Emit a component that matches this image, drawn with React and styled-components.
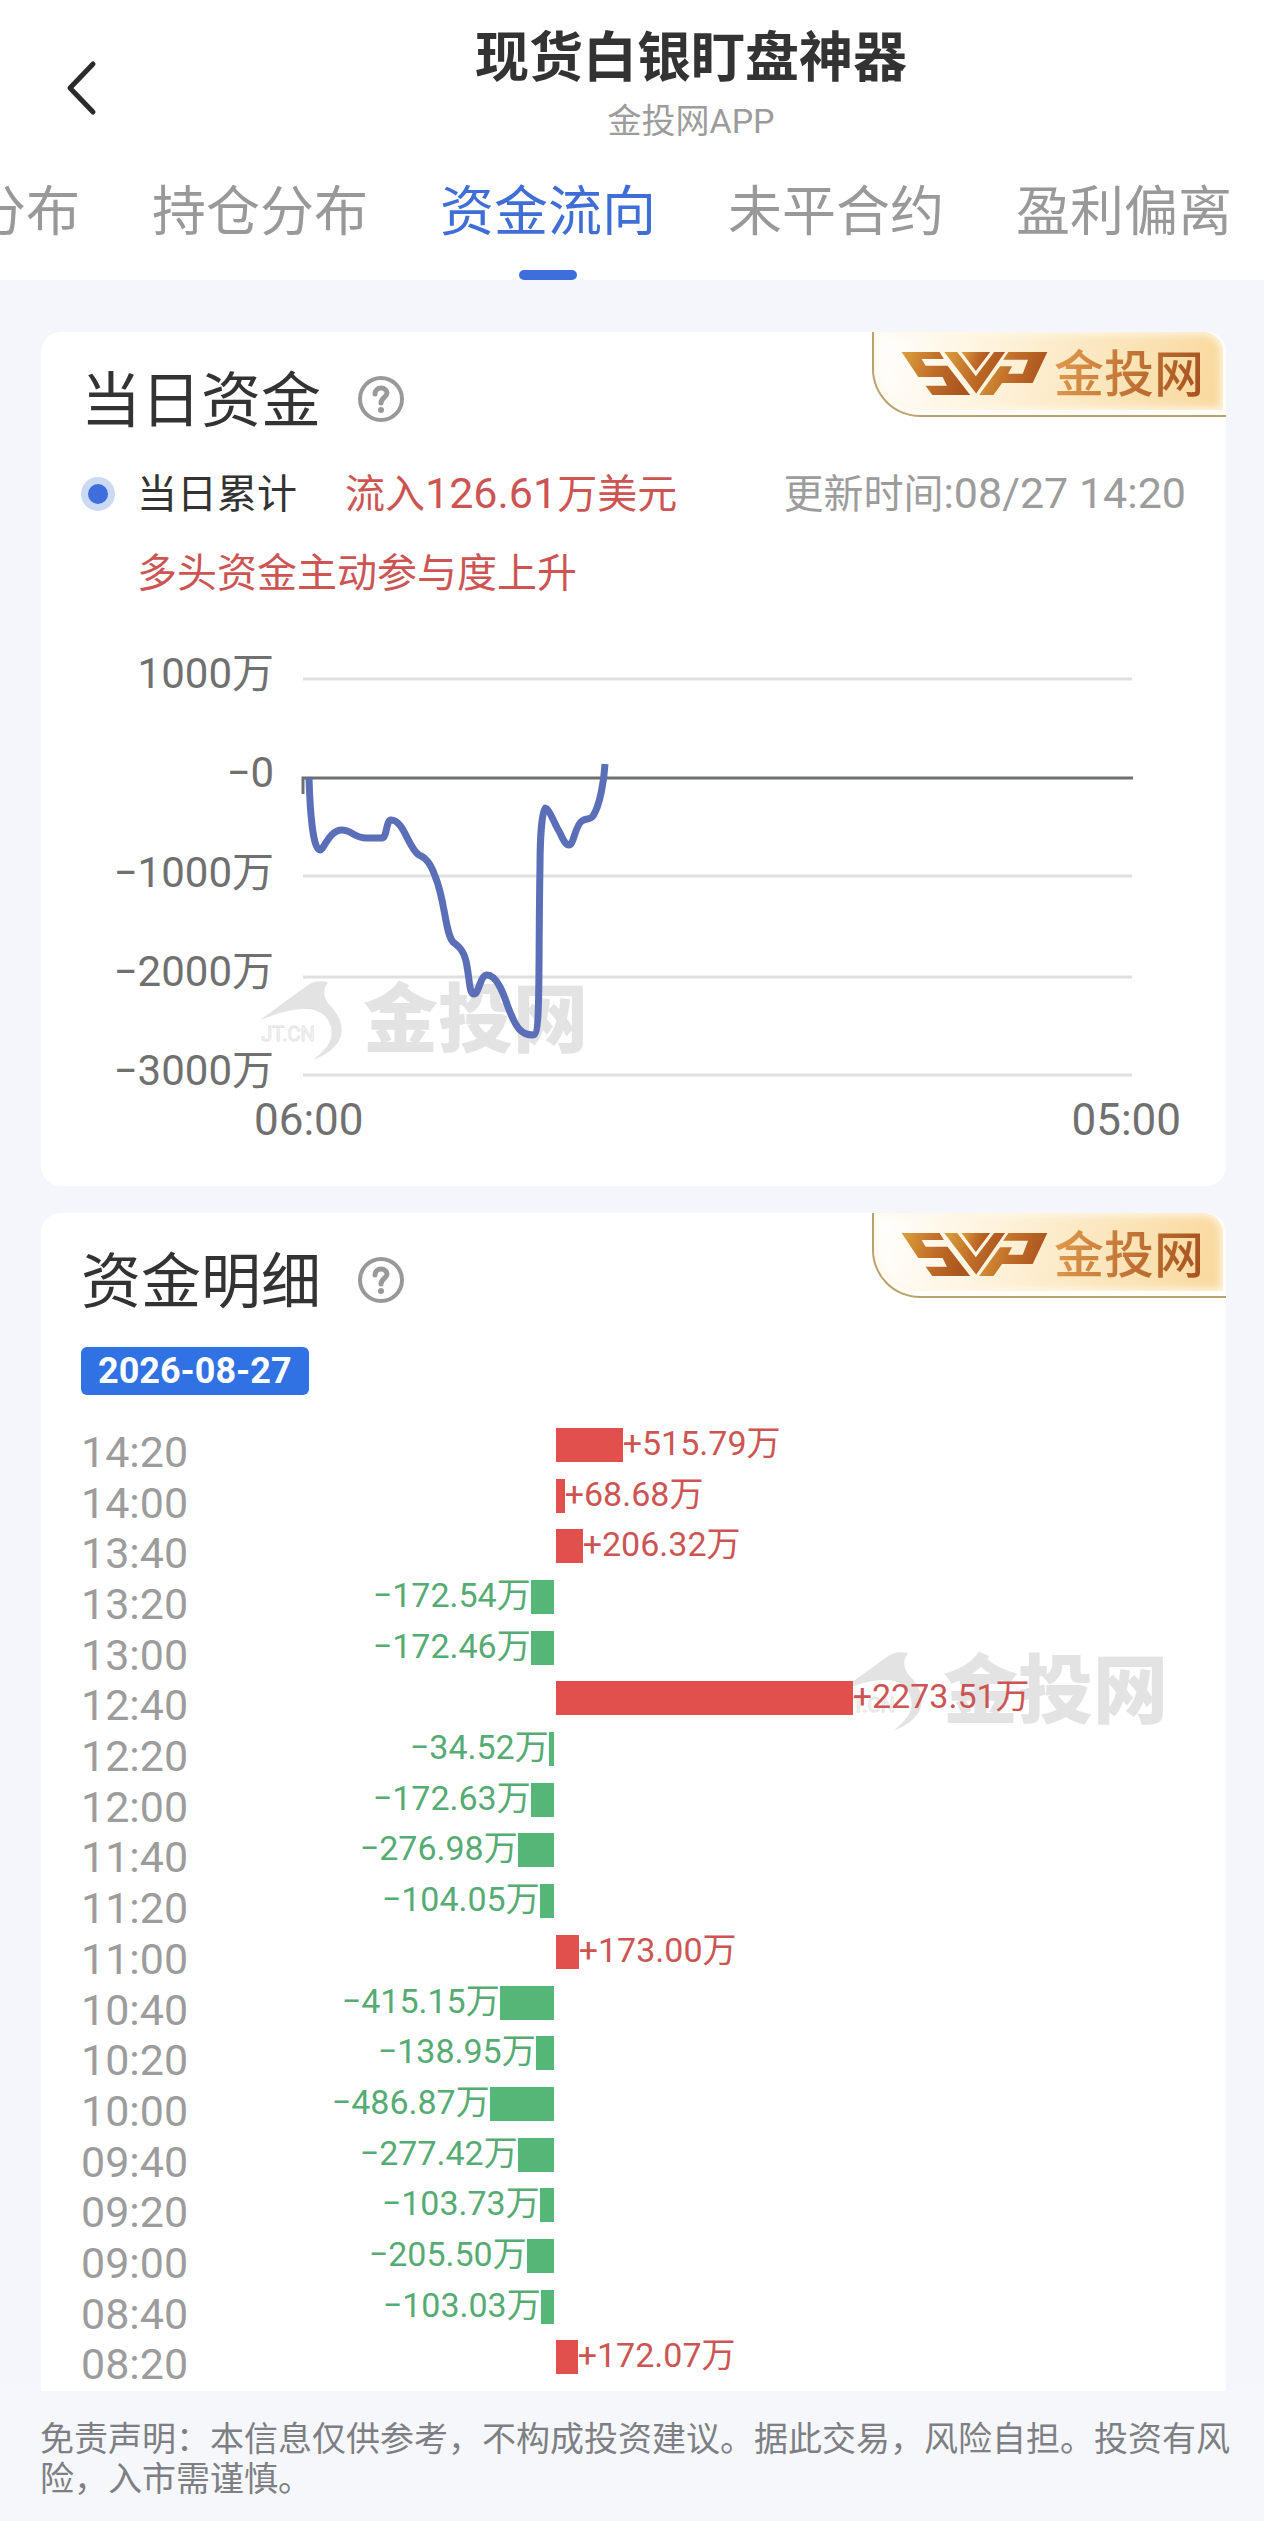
import React, { useState } from "react";
import styled, { createGlobalStyle } from "styled-components";

const GlobalStyle = createGlobalStyle`
    * {
        box-sizing: border-box;
    }

    body {
        margin: 0;
        background-color: #f5f6fb;
        font-family: Roboto, 'Noto Sans CJK SC', sans-serif;
        color: #333333;
    }

    button {
        border: none;
        background: none;
        padding: 0;
        font: inherit;
        color: inherit;
        cursor: pointer;
    }
`;

const Page = styled.div`
    overflow: hidden;
`;

const Header = styled.header`
    background-color: #ffffff;
`;

const TitleBar = styled.div`
    display: grid;
    grid-template-columns: 118px 1fr;
    padding-top: 20px;
`;

const BackButton = styled.button`
    display: flex;
    align-items: center;
    height: 136px;
    padding-left: 66px;
`;

const TitleBox = styled.div`
    text-align: center;
`;

const Title = styled.h1`
    margin: 0;
    font-size: 54px;
    font-weight: 700;
    line-height: 78px;
`;

const SubTitle = styled.div`
    color: #9c9c9c;
    font-size: 34px;
    line-height: 46px;
`;

const Tabs = styled.nav`
    display: flex;
    justify-content: flex-end;
    gap: 72px;
    padding: 17px 32px 0px 0px;
    overflow: hidden;
`;

const Tab = styled.button`
    display: flex;
    flex-direction: column;
    align-items: center;
    gap: 17px;
    flex-shrink: 0;

    color: ${props => (props.$active ? '#3f6fd6' : '#999999')};
    font-size: 54px;
    line-height: 80px;
    white-space: nowrap;
`;

const TabLine = styled.span`
    width: 58px;
    height: 10px;
    border-radius: 5px;
    background-color: ${props => (props.$active ? '#3d6edb' : 'transparent')};
`;

const Main = styled.main`
    display: flex;
    flex-direction: column;
    gap: 27px;
    padding: 52px 38px 0px 41px;
`;

const Card = styled.section`
    position: relative;
    padding: ${props => (props.$open ? '38px 40px 0px 40px' : '38px 40px 37px 40px')};
    border-radius: ${props => (props.$open ? '20px 20px 0 0' : '20px')};
    background-color: #ffffff;
    overflow: hidden;
`;

const CardBody = styled.div`
    position: relative;
`;

const CardHead = styled.div`
    display: flex;
    align-items: center;
    gap: 36px;
    height: 60px;
`;

const CardTitle = styled.h2`
    margin: 0;
    padding-top: 4px;
    font-size: 60px;
    font-weight: 400;
    line-height: 60px;
`;

const HelpButton = styled.button`
    display: flex;
`;

const BadgeBox = styled.div`
    position: absolute;
    top: 0;
    right: 0;
    width: 354px;
    height: 85px;
    padding: 0px 3px 5px 0px;

    border-left: 2px solid #b9a26c;
    border-bottom: 2px solid #b9a26c;
    border-radius: 0 0 0 48px;
    background-color: #fffdf8;
`;

const BadgeFill = styled.div`
    display: flex;
    align-items: center;
    gap: 6px;
    height: 100%;
    padding: 5px 0px 0px 27px;

    border-radius: 0 20px 0 44px;
    background: linear-gradient(100deg, #ffffff 0%, #fef4df 30%, #fbe6bd 65%, #f9d89c 100%);
    box-shadow: inset 0 0 8px 2px #fff8e8;
`;

const BadgeText = styled.span`
    padding-top: 2px;
    font-size: 50px;
    font-weight: 500;
    line-height: 60px;
    color: transparent;
    background: linear-gradient(100deg, #e09a4c, #a4501f);
    background-clip: text;
`;

const WatermarkBox = styled.div`
    position: absolute;
    top: ${props => props.$top};
    left: ${props => props.$left};
    display: flex;
    align-items: center;
    gap: 20px;
    color: #e3e3e3;
`;

const WatermarkText = styled.span`
    font-size: 75px;
    font-weight: 900;
    line-height: 80px;
`;

const Line = styled.div`
    display: flex;
    align-items: center;
    font-size: 40px;
    line-height: 79px;
`;

const Legend = styled(Line)`
    margin-top: 24px;
`;

const Dot = styled.span`
    width: 34px;
    height: 34px;
    border: 7px solid #cbd9f5;
    border-radius: 50%;
    background-color: #3d6edb;
`;

const LegendName = styled.span`
    margin-left: 22px;
`;

const Inflow = styled.span`
    margin-left: 48px;
    color: #cc5553;
`;

const Updated = styled.time`
    margin-left: auto;
    color: #9c9c9c;
`;

const Num = styled.span`
    font-size: 43px;
`;

const Hint = styled(Line)`
    padding-left: 56px;
    color: #cc5553;
`;

const Chart = styled.div`
    display: grid;
    grid-template-columns: 193px 1fr;
    gap: 29px;
    margin-top: 41px;
    padding-right: 54px;
`;

const YAxis = styled.div`
    display: flex;
    flex-direction: column;
    justify-content: space-between;
    height: 437px;

    color: #707070;
    font-size: 42px;
    line-height: 40px;
    text-align: right;
`;

const Plot = styled.svg`
    display: block;
    width: 100%;
    margin-top: 23px;
    overflow: visible;
`;

const XAxis = styled.div`
    display: flex;
    justify-content: space-between;
    padding: 0px 5px 0px 173px;

    color: #707070;
    font-size: 44px;
    line-height: 58px;
`;

const DateTag = styled.div`
    width: fit-content;
    margin-top: 36px;
    padding: 0px 17px;
    border-radius: 6px;
    background-color: #3071e3;

    color: #ffffff;
    font-size: 36px;
    font-weight: 700;
    line-height: 48px;
`;

const FlowList = styled.ul`
    display: grid;
    grid-auto-rows: 1fr;
    height: 963px;
    margin: 33px 0px 0px;
    padding: 0;
    list-style: none;
`;

const FlowRow = styled.li`
    display: grid;
    grid-template-columns: 3fr 4fr;
    gap: 2px;
    align-items: start;
`;

const FlowSide = styled.div`
    display: flex;
    justify-content: space-between;
    height: 34px;
`;

const FlowTime = styled.time`
    color: #9c9c9c;
    font-size: 43px;
    line-height: 48px;
`;

const FlowValue = styled.div`
    display: flex;
    color: ${props => (props.$up ? '#cc5553' : '#56ab73')};
    font-size: 34px;
    line-height: 30px;
    white-space: nowrap;
`;

const FlowBar = styled.span`
    height: 34px;
    background-color: ${props => (props.$up ? '#e2504d' : '#56b678')};
`;

const Disclaimer = styled.footer`
    padding: 28px 32px 30px 40px;
    background-color: #f6f7fb;

    color: #7d7f84;
    font-size: 34px;
    line-height: 40px;
`;

const tabs = ['分布', '持仓分布', '资金流向', '未平合约', '盈利偏离'];

const ticks = ['1000万', '−0', '−1000万', '−2000万', '−3000万'];

const flows = [
    ['14:20', 515.79],
    ['14:00', 68.68],
    ['13:40', 206.32],
    ['13:20', -172.54],
    ['13:00', -172.46],
    ['12:40', 2273.51],
    ['12:20', -34.52],
    ['12:00', -172.63],
    ['11:40', -276.98],
    ['11:20', -104.05],
    ['11:00', 173.00],
    ['10:40', -415.15],
    ['10:20', -138.95],
    ['10:00', -486.87],
    ['09:40', -277.42],
    ['09:20', -103.73],
    ['09:00', -205.50],
    ['08:40', -103.03],
    ['08:20', 172.07],
];

// pixels of bar per 万
const BAR_SCALE = 0.1305;

function Badge() {
    return (
        <BadgeBox>
            <BadgeFill>
                <svg width="147" height="45" viewBox="18 29 442 133" aria-hidden="true">
                    <defs>
                        <linearGradient id="svp" x1="0" y1="0" x2="1" y2="0.2">
                            <stop offset="0" stopColor="#dca03c" />
                            <stop offset="0.5" stopColor="#c2702a" />
                            <stop offset="1" stopColor="#ab551f" />
                        </linearGradient>
                    </defs>
                    <g fill="url(#svp)">
                        <path d="M20 31H134L147 52H80L92 72H158L226 160H112L92 132H156L143 106H70Z" />
                        <path d="M148 31H187L243 104L298 31H331L244 156Z" />
                        <path d="M200 31H286L243 88Z" />
                        <path d="M341 31H458L414 124H322L296 160H253L316 74H352L340 96H384L400 54H325Z" />
                    </g>
                </svg>
                <BadgeText>金投网</BadgeText>
            </BadgeFill>
        </BadgeBox>
    );
}

function Watermark({ top, left }) {
    return (
        <WatermarkBox $top={top} $left={left} aria-hidden="true">
            <svg width="84" height="80" viewBox="26 30 250 240">
                <path
                    fill="currentColor"
                    d="M28 150C80 112 120 82 165 50C185 34 208 30 232 37C212 62 222 90 237 106C264 132 276 160 272 190C268 225 230 255 188 269C224 240 245 215 243 185C240 150 220 125 180 118C130 112 80 130 28 150Z"
                />
                <text x="32" y="213" fontSize="60" fill="#ffffff" stroke="#e3e3e3" strokeWidth="3">JT.CN</text>
            </svg>
            <WatermarkText>金投网</WatermarkText>
        </WatermarkBox>
    );
}

function Help() {
    return (
        <HelpButton aria-label="说明">
            <svg width="48" height="48" viewBox="0 0 48 48" fill="none" stroke="#999999">
                <circle cx="24" cy="23" r="21" strokeWidth="4" />
                <path d="M18 18C18 14 21 12 24 12C28 12 30 15 30 17C30 21 24 22 24 27" strokeWidth="5" strokeLinecap="round" />
                <circle cx="24" cy="34" r="3" fill="#999999" stroke="none" />
            </svg>
        </HelpButton>
    );
}

function Flow({ time, value }) {
    const up = value > 0;
    const width = Math.round(Math.abs(value) * BAR_SCALE);
    const text = `${up ? '+' : '−'}${Math.abs(value).toFixed(2)}万`;

    return (
        <FlowRow>
            <FlowSide>
                <FlowTime>{time}</FlowTime>
                {!up && <FlowValue>{text}<FlowBar style={{ width }} /></FlowValue>}
            </FlowSide>
            <FlowSide>
                {up && <FlowValue $up><FlowBar $up style={{ width }} />{text}</FlowValue>}
            </FlowSide>
        </FlowRow>
    );
}

function App() {
    const [active, setActive] = useState('资金流向');

    return (
        <Page>
            <GlobalStyle />
            <Header>
                <TitleBar>
                    <BackButton aria-label="返回">
                        <svg width="32" height="56" viewBox="0 0 32 56" fill="none" stroke="#2b2b2b" strokeWidth="5" strokeLinecap="round" strokeLinejoin="round">
                            <path d="M27 4L4 28L27 52" />
                        </svg>
                    </BackButton>
                    <TitleBox>
                        <Title>现货白银盯盘神器</Title>
                        <SubTitle>金投网APP</SubTitle>
                    </TitleBox>
                </TitleBar>
                <Tabs>
                    {tabs.map((name) => (
                        <Tab key={name} $active={name === active} onClick={() => setActive(name)}>
                            {name}
                            <TabLine $active={name === active} />
                        </Tab>
                    ))}
                </Tabs>
            </Header>

            <Main>
                <Card>
                    <Watermark top="648px" left="218px" />
                    <Badge />
                    <CardBody>
                        <CardHead>
                            <CardTitle>当日资金</CardTitle>
                            <Help />
                        </CardHead>
                        <Legend>
                            <Dot />
                            <LegendName>当日累计</LegendName>
                            <Inflow>流入<Num>126.61</Num>万美元</Inflow>
                            <Updated>更新时间<Num>:08/27 14:20</Num></Updated>
                        </Legend>
                        <Hint>多头资金主动参与度上升</Hint>
                        <Chart>
                            <YAxis>
                                {ticks.map((tick) => <span key={tick}>{tick}</span>)}
                            </YAxis>
                            <Plot viewBox="0 0 829 400" fill="none">
                                <path d="M0 2H829M0 199H829M0 300H829M0 398H829" stroke="#e0e0e0" strokeWidth="3" />
                                <path d="M0 117V101H830" stroke="#6e7070" strokeWidth="3" />
                                <path
                                    d="M6 101C7 135 10 173 17 173C21 173 26 153 39 153C48 153 52 161 63 161H79C84 161 83 143 88 143C101 143 105 171 116 178C124 181 129 190 132 199C142 222 142 256 150 265C155 269 160 272 163 284C167 303 166 317 171 317C176 317 177 298 184 298C194 298 201 318 205 330C213 351 218 358 230 358C238 358 235 300 237 190C237 155 240 131 242 131C246 131 252 148 256 154C260 162 262 168 266 168C271 168 272 148 279 144C283 141 287 143 290 139C297 128 301 104 302 87"
                                    stroke="#5b6fb8"
                                    strokeWidth="7"
                                    strokeLinejoin="round"
                                />
                            </Plot>
                        </Chart>
                        <XAxis>
                            <span>06:00</span>
                            <span>05:00</span>
                        </XAxis>
                    </CardBody>
                </Card>

                <Card $open>
                    <Watermark top="438px" left="798px" />
                    <Badge />
                    <CardBody>
                        <CardHead>
                            <CardTitle>资金明细</CardTitle>
                            <Help />
                        </CardHead>
                        <DateTag>2026-08-27</DateTag>
                        <FlowList>
                            {flows.map(([time, value]) => <Flow key={time} time={time} value={value} />)}
                        </FlowList>
                    </CardBody>
                </Card>
            </Main>

            <Disclaimer>
                免责声明：本信息仅供参考，不构成投资建议。据此交易，风险自担。投资有风险，入市需谨慎。
            </Disclaimer>
        </Page>
    );
}

export default App;
